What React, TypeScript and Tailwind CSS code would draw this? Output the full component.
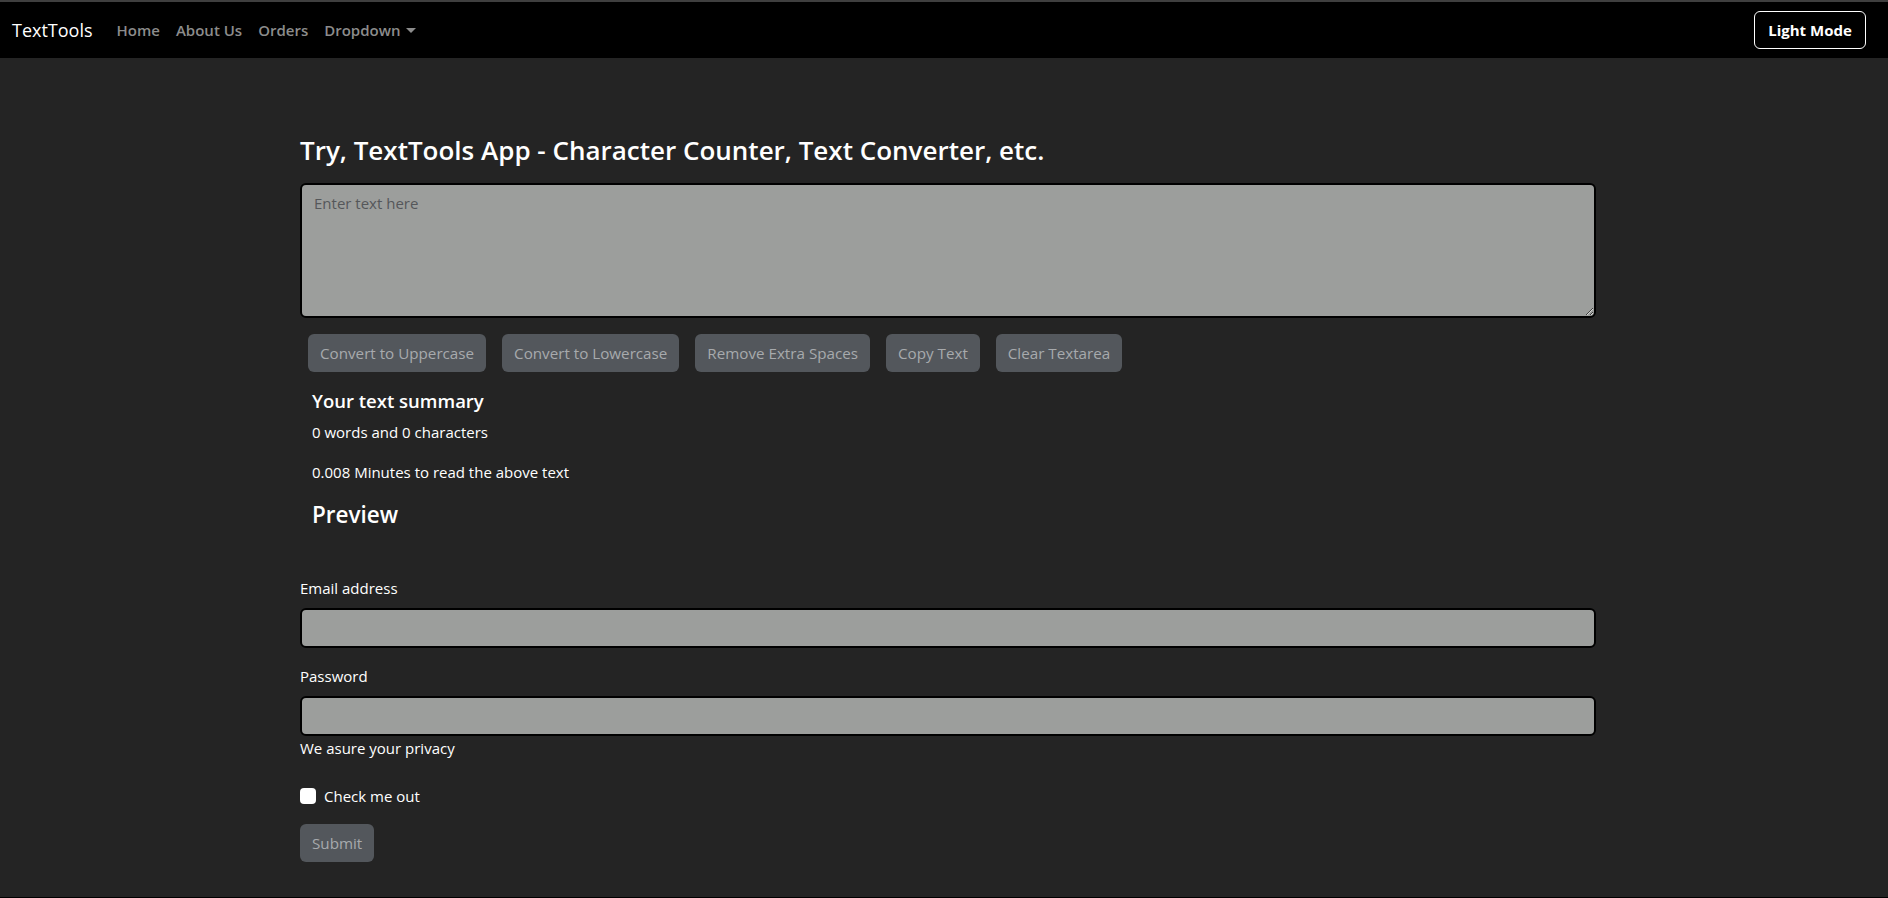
import React from "react";

export default function App() {
  return (
    <div className="h-[898px] overflow-hidden bg-[#242424] border-t-2 border-t-[#3f3f3f] border-b border-b-black text-white font-['Open_Sans',sans-serif]">
      <nav className="h-14 bg-black flex items-center pl-3 pr-[22px]">
        <span className="text-[18px] text-white mr-4 leading-[30px]">TextTools</span>
        <a className="px-2 text-[15px] font-semibold text-[#8c8c8c] leading-6">Home</a>
        <a className="px-2 text-[15px] font-semibold text-[#8c8c8c] leading-6">About Us</a>
        <a className="px-2 text-[15px] font-semibold text-[#8c8c8c] leading-6">Orders</a>
        <a className="px-2 text-[15px] font-semibold text-[#8c8c8c] leading-6 flex items-center">
          Dropdown
          <span className="inline-block ml-[6px] border-t-[5px] border-x-[5px] border-x-transparent border-t-[#8c8c8c]" />
        </a>
        <button className="ml-auto h-[38px] w-[112px] border border-white rounded-md font-bold text-[15px] text-white">
          Light Mode
        </button>
      </nav>

      <main className="ml-[300px] w-[1296px]">
        <h1 className="mt-[75px] mb-4 text-[26px] leading-[34px] font-semibold">
          Try, TextTools App - Character Counter, Text Converter, etc.
        </h1>
        <textarea
          rows={5}
          placeholder="Enter text here"
          className="block w-full h-[135px] bg-[#9c9e9c] border-2 border-black rounded-md px-3 py-1.5 text-[15px] leading-6 text-black placeholder:text-[#55575a] outline-none"
        />
        <div className="mt-[16px] flex">
          {["Convert to Uppercase", "Convert to Lowercase", "Remove Extra Spaces", "Copy Text", "Clear Textarea"].map((t) => (
            <button
              key={t}
              disabled
              className="mx-2 h-[38px] px-3 rounded-md bg-[#53575c] text-[#a7aaad] text-[15.2px]"
            >
              {t}
            </button>
          ))}
        </div>

        <div className="mt-[17px] px-3">
          <h2 className="text-[18.5px] leading-6 font-semibold mb-[7px]">Your text summary</h2>
          <p className="text-[15px] leading-6 mb-4">0 words and 0 characters</p>
          <p className="text-[15px] leading-6 mb-4">0.008 Minutes to read the above text</p>
          <h2 className="text-[22.5px] leading-[29px] font-semibold mt-px">Preview</h2>
        </div>

        <form className="mt-[47px]">
          <label className="block text-[15px] leading-6 mb-2">Email address</label>
          <input className="block w-full h-10 border-2 border-black rounded-md bg-[#9c9e9c] mb-4 outline-none" />
          <label className="block text-[15px] leading-6 mb-2">Password</label>
          <input type="password" className="block w-full h-10 border-2 border-black rounded-md bg-[#9c9e9c] outline-none" />
          <div className="text-[15px] leading-6">We asure your privacy</div>
          <div className="mt-[24px] flex items-center gap-2">
            <input type="checkbox" className="appearance-none w-4 h-4 bg-white rounded-[4px]" />
            <span className="text-[15px] leading-6">Check me out</span>
          </div>
          <button
            type="button"
            disabled
            className="mt-[16px] h-[38px] px-3 rounded-md bg-[#53575c] text-[#a7aaad] text-[15.2px]"
          >
            Submit
          </button>
        </form>
      </main>
    </div>
  );
}
